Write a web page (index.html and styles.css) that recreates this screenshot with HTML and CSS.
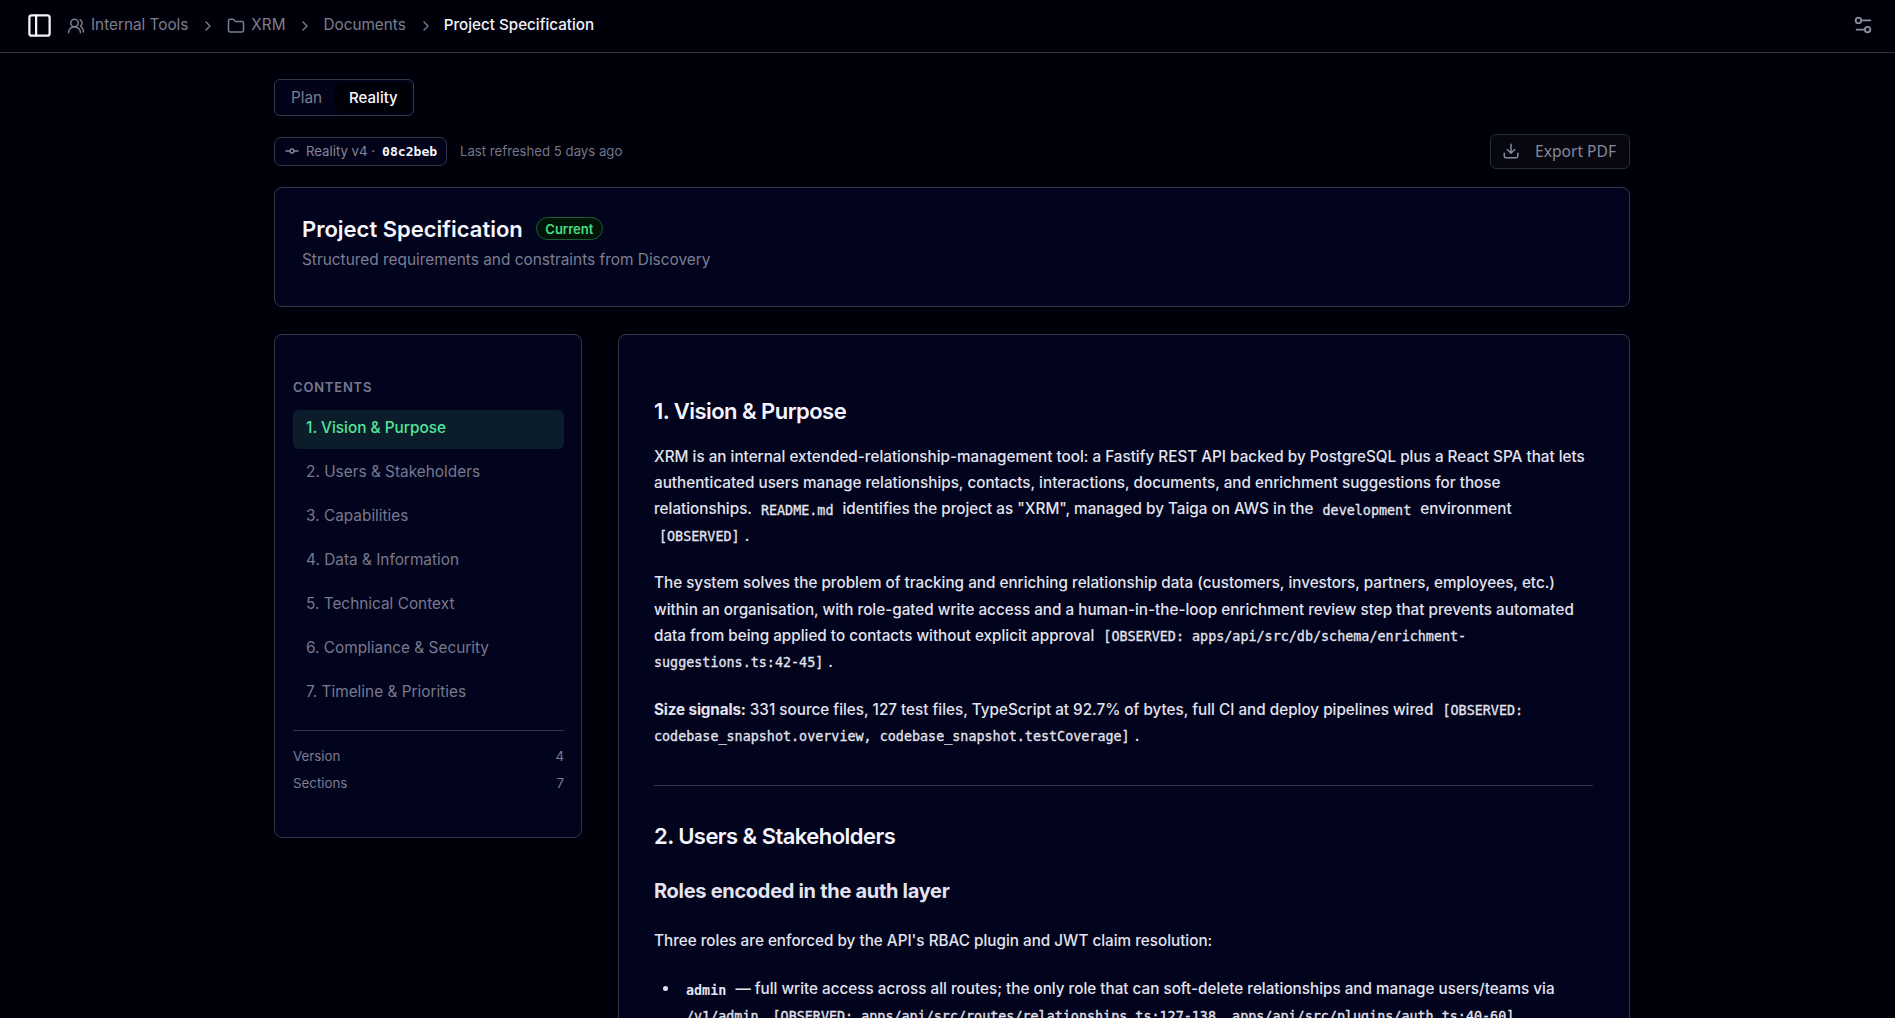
FILE: index.html
```html
<!DOCTYPE html>
<html lang="en">
<head>
<meta charset="utf-8">
<title>Project Specification</title>
<link rel="stylesheet" href="styles.css">
</head>
<body>
<header class="topbar">
  <svg class="icon panel-icon" viewBox="0 0 24 24"><rect x="3" y="3" width="18" height="18" rx="2"/><path d="M9 3v18"/></svg>
  <nav class="crumbs">
    <span class="crumb crumb-team"><svg class="icon crumb-icon" viewBox="0 0 24 24"><path d="M18 21a8 8 0 0 0-16 0"/><circle cx="10" cy="8" r="5"/><path d="M22 20c0-3.37-2-6.5-4-8a5 5 0 0 0-.45-8.3"/></svg><span class="crumb-text">Internal Tools</span></span>
    <svg class="icon chevron" viewBox="0 0 24 24"><path d="m9 18 6-6-6-6"/></svg>
    <span class="crumb crumb-project"><svg class="icon crumb-icon" viewBox="0 0 24 24"><path d="M20 20a2 2 0 0 0 2-2V8a2 2 0 0 0-2-2h-7.900a2 2 0 0 1-1.690-.9L9.600 3.900A2 2 0 0 0 7.930 3H4a2 2 0 0 0-2 2v13a2 2 0 0 0 2 2Z"/></svg><span class="crumb-text">XRM</span></span>
    <svg class="icon chevron" viewBox="0 0 24 24"><path d="m9 18 6-6-6-6"/></svg>
    <span class="crumb crumb-docs">Documents</span>
    <svg class="icon chevron" viewBox="0 0 24 24"><path d="m9 18 6-6-6-6"/></svg>
    <span class="crumb crumb-current">Project Specification</span>
  </nav>
  <svg class="icon settings-icon" viewBox="0 0 24 24"><path d="M20 7h-9M14 17H5"/><circle cx="17" cy="17" r="3"/><circle cx="7" cy="7" r="3"/></svg>
</header>
<main class="page">
  <div class="tabs"><span class="tab">Plan</span><span class="tab tab-active">Reality</span></div>
  <div class="meta">
    <div class="version"><svg class="icon commit-icon" viewBox="0 0 24 24"><circle cx="12" cy="12" r="3"/><path d="M3 12h6M15 12h6"/></svg><span class="version-text">Reality v4 ·</span><span class="hash">08c2beb</span></div>
    <span class="refreshed">Last refreshed 5 days ago</span>
    <button class="export"><svg class="icon export-icon" viewBox="0 0 24 24"><path d="M12 15V3M21 15v4a2 2 0 0 1-2 2H5a2 2 0 0 1-2-2v-4M7 10l5 5 5-5"/></svg><span class="export-text">Export PDF</span></button>
  </div>
  <section class="card intro">
    <div class="intro-head"><h1 class="title">Project Specification</h1><span class="badge">Current</span></div>
    <p class="subtitle">Structured requirements and constraints from Discovery</p>
  </section>
  <div class="columns">
    <aside class="card contents">
      <h2 class="contents-title">CONTENTS</h2>
      <ul class="toc">
        <li class="toc-item toc-active"><span>1. Vision &amp; Purpose</span></li>
        <li class="toc-item"><span>2. Users &amp; Stakeholders</span></li>
        <li class="toc-item"><span>3. Capabilities</span></li>
        <li class="toc-item"><span>4. Data &amp; Information</span></li>
        <li class="toc-item"><span>5. Technical Context</span></li>
        <li class="toc-item"><span>6. Compliance &amp; Security</span></li>
        <li class="toc-item"><span>7. Timeline &amp; Priorities</span></li>
      </ul>
      <div class="stats">
        <div class="stat"><span>Version</span><span>4</span></div>
        <div class="stat"><span>Sections</span><span>7</span></div>
      </div>
    </aside>
    <article class="card doc">
      <h2 class="doc-h2">1. Vision &amp; Purpose</h2>
      <p class="para">XRM is an internal extended-relationship-management tool: a Fastify REST API backed by PostgreSQL plus a React SPA that lets<br>authenticated users manage relationships, contacts, interactions, documents, and enrichment suggestions for those<br>relationships. <code class="code">README.md</code> identifies the project as "XRM", managed by Taiga on AWS in the <code class="code">development</code> environment<br><code class="code">[OBSERVED]</code>.</p>
      <p class="para">The system solves the problem of tracking and enriching relationship data (customers, investors, partners, employees, etc.)<br>within an organisation, with role-gated write access and a human-in-the-loop enrichment review step that prevents automated<br>data from being applied to contacts without explicit approval <code class="code">[OBSERVED: apps/api/src/db/schema/enrichment-<br>suggestions.ts:42-45]</code>.</p>
      <p class="para"><strong class="strong">Size signals:</strong> 331 source files, 127 test files, TypeScript at 92.7% of bytes, full CI and deploy pipelines wired <code class="code">[OBSERVED:<br>codebase_snapshot.overview, codebase_snapshot.testCoverage]</code>.</p>
      <hr class="rule">
      <h2 class="doc-h2">2. Users &amp; Stakeholders</h2>
      <h3 class="doc-h3">Roles encoded in the auth layer</h3>
      <p class="para para-lead">Three roles are enforced by the API's RBAC plugin and JWT claim resolution:</p>
      <ul class="list">
        <li class="list-item"><code class="code code-bold">admin</code> — full write access across all routes; the only role that can soft-delete relationships and manage users/teams via<br><code class="code code-start">/v1/admin</code><code class="code code-next">[OBSERVED: apps/api/src/routes/relationships.ts:127-138, apps/api/src/plugins/auth.ts:40-60]</code></li>
      </ul>
    </article>
  </div>
</main>
</body>
</html>
```
FILE: styles.css
```css
* { box-sizing: border-box; }
html, body { height: 100%; }
body {
  margin: 0;
  overflow: hidden;
  background: #00000a;
  color: #e3e4f0;
  font-family: Inter, "Liberation Sans", sans-serif;
  font-size: 15px;
  white-space: nowrap;
}
h1, h2, h3, p, ul { margin: 0; padding: 0; }
ul { list-style: none; }
.icon { flex: none; fill: none; stroke: currentColor; stroke-width: 2; stroke-linecap: round; stroke-linejoin: round; }

.topbar {
  display: flex;
  align-items: center;
  height: 53px;
  padding: 0 21px 3px 25px;
  border-bottom: 1px solid #32333e;
  color: #7c7e8e;
}
.panel-icon { width: 27px; height: 27px; margin: 1px 0 0 1px; color: #f2f2fc; }
.crumbs { display: flex; align-items: center; margin-left: 14px; font-size: 15.300px; }
.crumb { display: flex; align-items: center; }
.crumb-icon { width: 18px; height: 18px; margin: 2px 6px 0 0; }
.chevron { width: 16px; height: 16px; margin: 2px 10px 0 12px; }
.crumb-project { margin-left: 1px; }
.crumb-current { color: #f2f2fc; font-size: 15.200px; font-weight: 500; }
.settings-icon { width: 22px; height: 22px; margin-left: auto; color: #8b8d9c; }

.page { width: 1356px; margin-left: 274px; padding-top: 26px; }
.tabs {
  display: inline-flex;
  width: 140px;
  height: 37px;
  padding: 2px;
  border: 1px solid #34364a;
  border-radius: 6px;
  background: #020318;
  vertical-align: top;
}
.tab { display: flex; align-items: center; padding: 0 13px 0 14px; font-size: 15.300px; color: #7c7e90; }
.tab-active { flex: 1; padding-left: 14px; border-radius: 5px; background: #000008; color: #f8f8ff; font-size: 15px; font-weight: 500; }

.meta { display: flex; align-items: center; height: 35px; margin-top: 18px; font-size: 13.200px; line-height: 16px; color: #747687; }
.version {
  display: flex;
  align-items: center;
  width: 173px;
  height: 29px;
  padding: 0 0 1px 9px;
  border: 1px solid #34364a;
  border-radius: 7px;
  background: #020318;
  color: #84869a;
}
.commit-icon { width: 16px; height: 16px; margin-right: 6px; }
.hash { margin-left: 7px; color: #f4f4ff; font: 700 13.100px "DejaVu Sans Mono", monospace; }
.refreshed { margin: 0 0 1px 13px; }
.export {
  display: flex;
  align-items: center;
  width: 140px;
  height: 35px;
  margin-left: auto;
  padding: 0 0 1px 11px;
  border: 1px solid #292b37;
  border-radius: 6px;
  background: #060711;
  color: #878998;
  font: 15.600px "Noto Sans", sans-serif;
}
.export-icon { width: 18px; height: 18px; margin-right: 15px; }

.card { border: 1px solid #34364a; border-radius: 8px; background: #02031c; }
.intro { height: 120px; margin-top: 18px; padding: 26px 27px; }
.intro-head { display: flex; align-items: center; height: 29px; }
.title { font-size: 22px; font-weight: 600; color: #f6f6ff; }
.badge {
  display: flex;
  align-items: center;
  height: 23px;
  margin: 0 0 0 13px;
  padding: 0 8.500px;
  border: 1px solid #156038;
  border-radius: 12px;
  background: #021408;
  color: #4ade80;
  font-size: 13px;
  font-weight: 600;
}
.subtitle { margin-top: 7px; font-size: 15.400px; line-height: 20px; color: #7c7e93; }

.columns { display: flex; align-items: flex-start; gap: 36px; margin-top: 27px; }
.contents { width: 308px; height: 504px; padding: 43px 17px 0 18px; }
.contents-title { font-size: 13px; line-height: 18px; font-weight: 600; letter-spacing: 0.800px; color: #77798e; }
.toc { display: flex; flex-direction: column; gap: 5px; margin-top: 14px; }
.toc-item { display: flex; align-items: center; height: 39px; padding: 0 13px 4px; border-radius: 6px; font-size: 15.380px; color: #77798e; }
.toc-active { background: #0b1d2a; color: #52e49a; font-weight: 500; }
.stats { margin-top: 17px; padding-top: 12px; border-top: 1px solid #34364a; font-size: 13.300px; color: #7c7e93; }
.stat { display: flex; justify-content: space-between; line-height: 27px; }

.doc { width: 1012px; height: 900px; padding: 59px 36px 0 35px; }
.doc-h2 { font-size: 22px; line-height: 34px; font-weight: 600; letter-spacing: -0.540px; color: #f4f4ff; }
.doc-h3 { margin-top: 22px; font-size: 20px; line-height: 32px; font-weight: 700; letter-spacing: -0.300px; }
.para { margin-top: 16px; font-size: 15.250px; line-height: 26.200px; font-weight: 500; }
.para + .para { margin-top: 21.500px; }
.para-lead { margin-top: 21px; }
.strong { font-weight: 700; letter-spacing: -0.150px; }
.code { padding: 0 5px; font: 13.400px "DejaVu Sans Mono", monospace; line-height: 20px; vertical-align: -0.500px; -webkit-text-stroke: 0.300px currentColor; }
.code-bold { padding-left: 0; font-weight: 700; -webkit-text-stroke: 0; }
.code-start { padding-left: 0; }
.code-next { padding-left: 9px; }
.rule { height: 1px; margin: 36px 0 33px; border: 0; background: #34364a; }
.list { margin-top: 22px; padding-left: 32px; }
.list-item { font-size: 15.250px; line-height: 26.200px; font-weight: 500; }
.list-item::before {
  content: "";
  display: inline-block;
  width: 5px;
  height: 5px;
  margin: 0 18px 3px -23px;
  border-radius: 50%;
  background: currentColor;
}
```
